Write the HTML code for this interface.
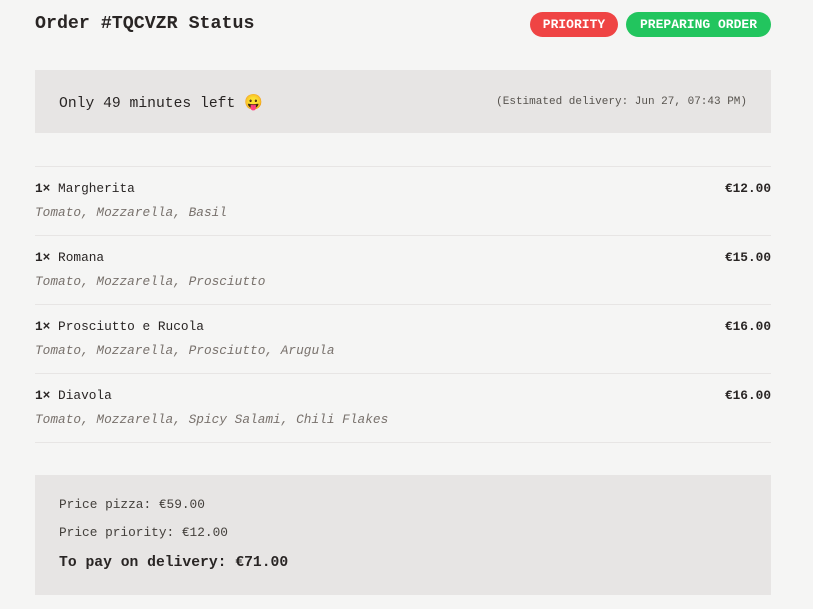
<!DOCTYPE html>
<html><head><style>
body{margin:0;background:#f5f5f4;font-family:"Liberation Mono",monospace;color:#292524;width:813px;height:609px;overflow:hidden;position:relative}
.a{position:absolute;white-space:nowrap}
.badge{position:absolute;top:12px;height:25px;border-radius:13px;color:#fff;font-weight:bold;font-size:13px;line-height:25px;text-align:center}
.hr{position:absolute;left:35px;width:736px;height:1px;background:#e7e5e4}
.n{font-size:12.8px}
.i{font-size:12.8px;font-style:italic;color:#78716c}
.p{font-size:12.8px;font-weight:bold;right:42px}
</style></head><body>
<div class="a" style="left:35px;top:12px;font-size:18.3px;font-weight:bold;line-height:24px">Order #TQCVZR Status</div>
<div class="badge" style="left:530px;width:88px;background:#ef4444">PRIORITY</div>
<div class="badge" style="left:626px;width:145px;background:#22c55e">PREPARING ORDER</div>
<div class="a" style="left:35px;top:70px;width:736px;height:63px;background:#e7e5e4"></div>
<div class="a" style="left:59px;top:92px;font-size:14.7px;line-height:20px">Only 49 minutes left <span style="font-family:'Noto Color Emoji',sans-serif;font-size:15px">😛</span></div>
<div class="a" style="right:66px;top:95px;font-size:11px;color:#57534e;line-height:14px">(Estimated delivery: Jun 27, 07:43 PM)</div>
<div class="hr" style="top:166px"></div>
<div class="hr" style="top:235px"></div>
<div class="hr" style="top:304px"></div>
<div class="hr" style="top:373px"></div>
<div class="hr" style="top:442px"></div>
<div class="a n" style="left:35px;top:181px"><b>1×</b> Margherita</div>
<div class="a p" style="top:181px">€12.00</div>
<div class="a i" style="left:35px;top:205px">Tomato, Mozzarella, Basil</div>
<div class="a n" style="left:35px;top:250px"><b>1×</b> Romana</div>
<div class="a p" style="top:250px">€15.00</div>
<div class="a i" style="left:35px;top:274px">Tomato, Mozzarella, Prosciutto</div>
<div class="a n" style="left:35px;top:319px"><b>1×</b> Prosciutto e Rucola</div>
<div class="a p" style="top:319px">€16.00</div>
<div class="a i" style="left:35px;top:343px">Tomato, Mozzarella, Prosciutto, Arugula</div>
<div class="a n" style="left:35px;top:388px"><b>1×</b> Diavola</div>
<div class="a p" style="top:388px">€16.00</div>
<div class="a i" style="left:35px;top:412px">Tomato, Mozzarella, Spicy Salami, Chili Flakes</div>
<div class="a" style="left:35px;top:475px;width:736px;height:120px;background:#e7e5e4"></div>
<div class="a" style="left:59px;top:497px;font-size:12.8px;color:#44403c">Price pizza: €59.00</div>
<div class="a" style="left:59px;top:525px;font-size:12.8px;color:#44403c">Price priority: €12.00</div>
<div class="a" style="left:59px;top:555px;font-size:14.7px;font-weight:bold">To pay on delivery: €71.00</div>
</body></html>
